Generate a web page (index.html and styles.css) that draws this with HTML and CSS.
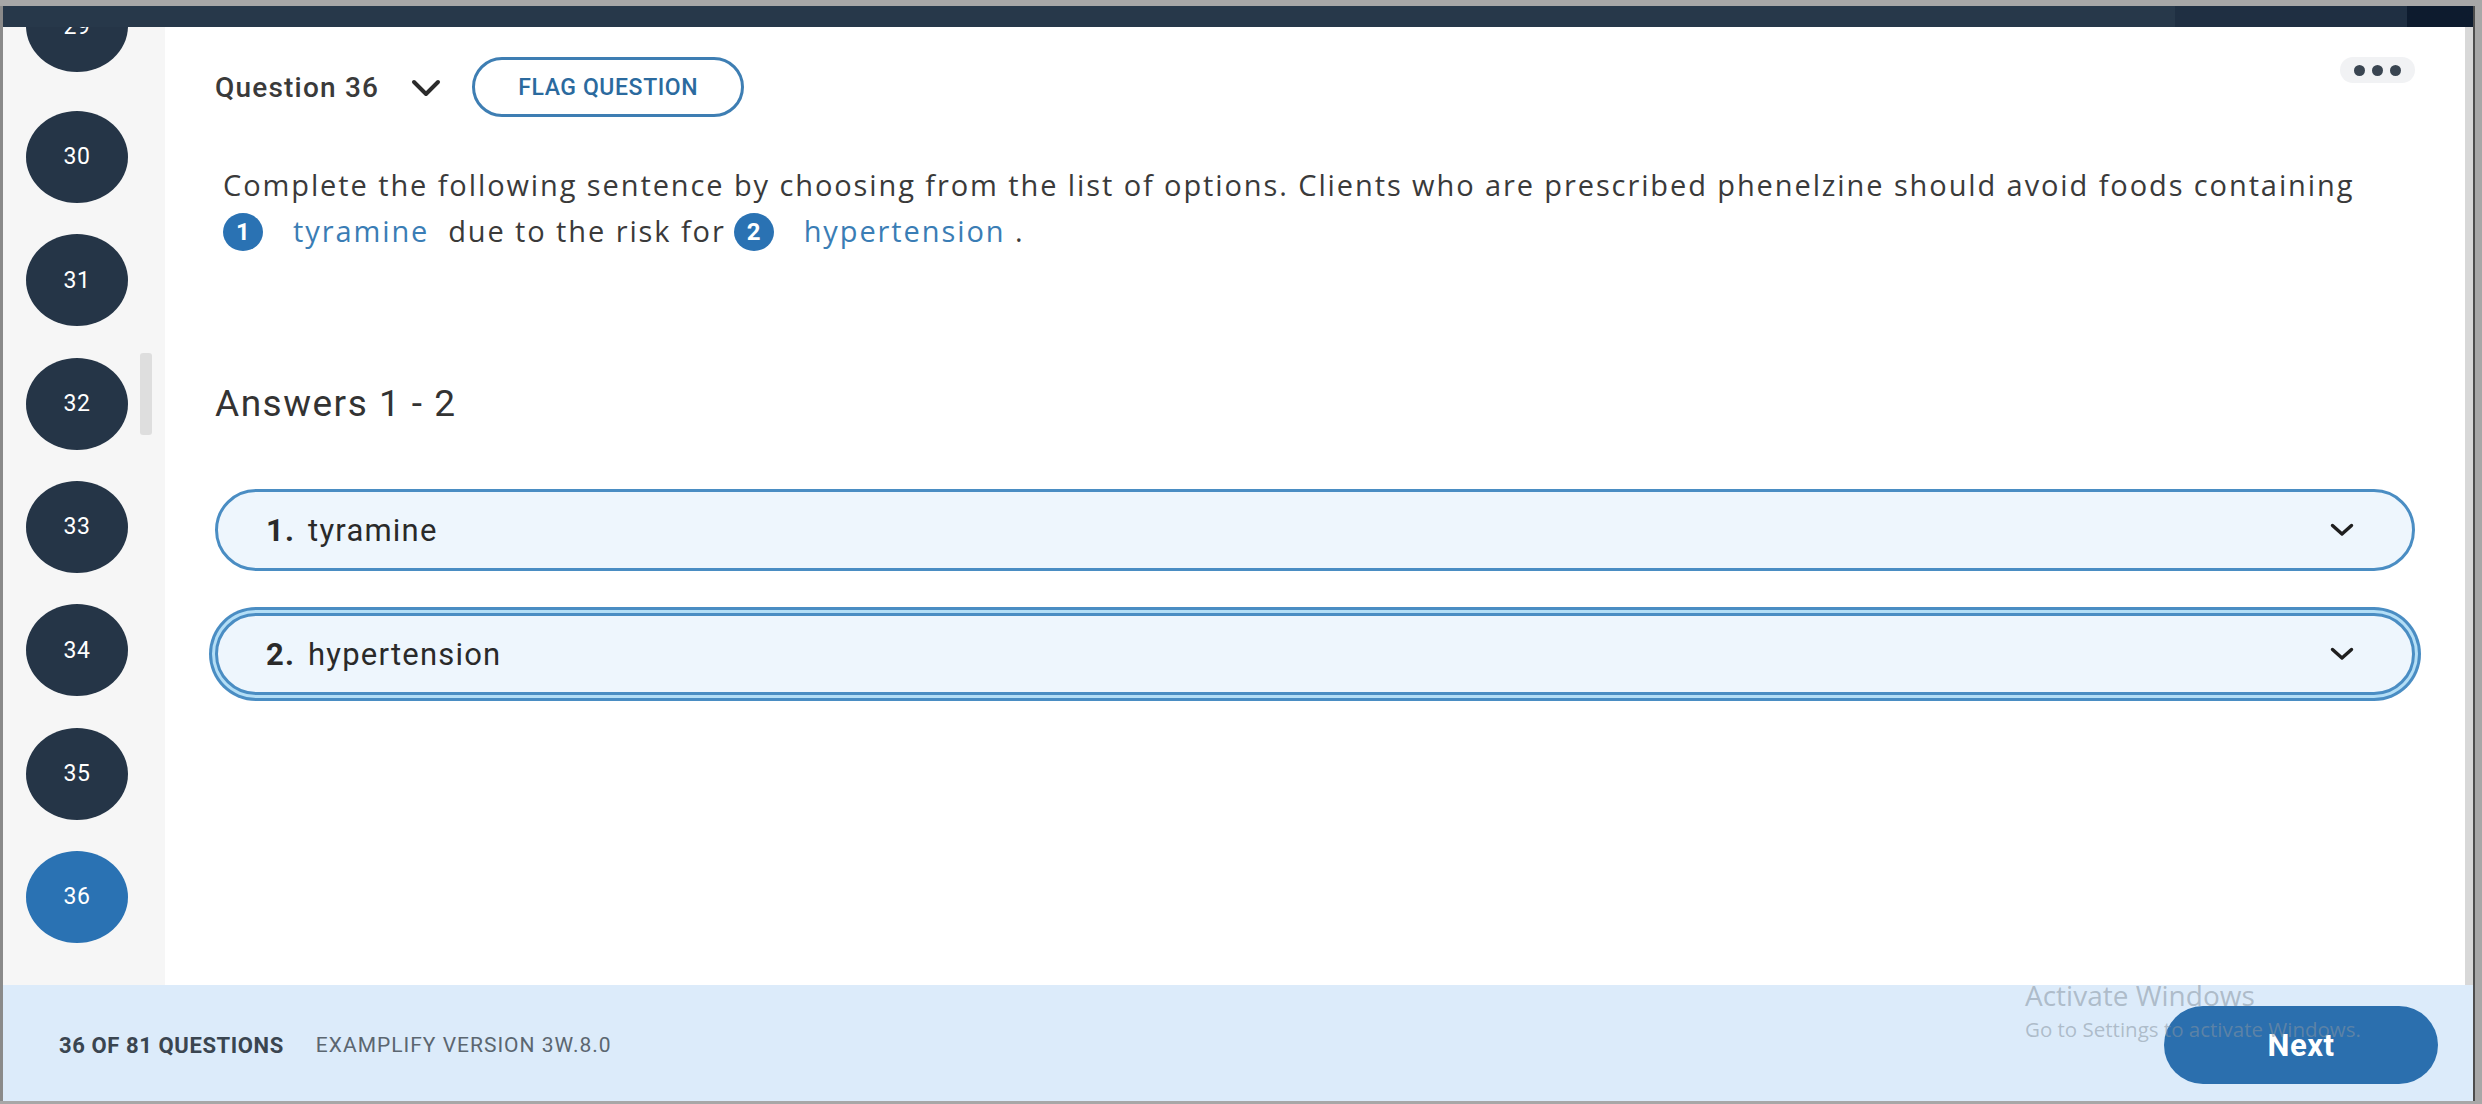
FILE: index.html
```html
<!DOCTYPE html>
<html lang="en">
<head>
<meta charset="utf-8">
<title>Examplify - Question 36</title>
<link rel="stylesheet" href="styles.css">
</head>
<body>
<div class="window">
  <div class="topbar"><div class="topbar-mid"></div><div class="topbar-end"></div></div>
  <div class="main">
    <aside class="sidebar">
      <ol class="qlist">
        <li class="qnum">29</li>
        <li class="qnum">30</li>
        <li class="qnum">31</li>
        <li class="qnum">32</li>
        <li class="qnum">33</li>
        <li class="qnum">34</li>
        <li class="qnum">35</li>
        <li class="qnum active">36</li>
      </ol>
      <div class="scroll-thumb"></div>
    </aside>
    <section class="content">
      <header class="qhead">
        <span class="qtitle">Question 36</span>
        <svg class="qchev" viewBox="0 0 30 18" width="30" height="18"><path d="M3 3 L15 15 L27 3" fill="none" stroke="#2b2b2b" stroke-width="4" stroke-linecap="round" stroke-linejoin="round"/></svg>
        <button class="flag">FLAG QUESTION</button>
        <button class="more"><span class="dot"></span><span class="dot"></span><span class="dot"></span></button>
      </header>
      <p class="prompt">Complete the following sentence by choosing from the list of options. Clients who are prescribed phenelzine should avoid foods containing <span class="badge">1</span><span class="fill">tyramine</span>&nbsp; due to the risk for<span class="badge b2">2</span><span class="fill">hypertension</span> .</p>
      <h2 class="answers-title">Answers 1 - 2</h2>
      <div class="answer">
        <span class="answer-text"><b>1.</b> tyramine</span>
        <svg class="achev" viewBox="0 0 24 14" width="24" height="14"><path d="M2.5 2.5 L12 11 L21.5 2.5" fill="none" stroke="#1f1f1f" stroke-width="3.4" stroke-linecap="round" stroke-linejoin="round"/></svg>
      </div>
      <div class="answer focused">
        <span class="answer-text"><b>2.</b> hypertension</span>
        <svg class="achev" viewBox="0 0 24 14" width="24" height="14"><path d="M2.5 2.5 L12 11 L21.5 2.5" fill="none" stroke="#1f1f1f" stroke-width="3.4" stroke-linecap="round" stroke-linejoin="round"/></svg>
      </div>
    </section>
    <div class="track"></div>
  </div>
  <footer class="footer">
    <span class="count">36 OF 81 QUESTIONS</span>
    <span class="version">EXAMPLIFY VERSION 3W.8.0</span>
    <button class="next">Next</button>
  </footer>
</div>
<div class="watermark">
  <div class="wm1">Activate Windows</div>
  <div class="wm2">Go to Settings to activate Windows.</div>
</div>
</body>
</html>
```

FILE: styles.css
```css
html, body {
  margin: 0;
  padding: 0;
}
body {
  background: #a7a7a7;
  width: 2482px;
  height: 1104px;
  overflow: hidden;
  position: relative;
  font-family: Roboto, "Liberation Sans", Arial, sans-serif;
}
.window {
  margin: 6px 0 0 3px;
  width: 2470px;
  height: 1095px;
  display: flex;
  flex-direction: column;
  box-shadow: 2px 0 0 #4d4d4d, -3px 0 0 #8a8a8a;
  background: #fff;
}
.topbar {
  height: 21px;
  flex: none;
  background: #27384a;
  display: flex;
  justify-content: flex-end;
}
.topbar-mid {
  width: 232px;
  background: #1f2f42;
}
.topbar-end {
  width: 66px;
  background: #0d1b2e;
}
.main {
  flex: 1;
  display: flex;
  min-height: 0;
}
.sidebar {
  width: 162px;
  flex: none;
  background: #f6f6f6;
  overflow: hidden;
  position: relative;
}
.qlist {
  list-style: none;
  margin: -47px 0 0 0;
  padding: 0 0 0 23px;
  display: flex;
  flex-direction: column;
  gap: 31.33px;
}
.qnum {
  width: 102px;
  height: 92px;
  border-radius: 50%;
  background: #253547;
  color: #fff;
  font-size: 23px;
  letter-spacing: 0.5px;
  display: flex;
  align-items: center;
  justify-content: center;
}
.qlist .qnum:first-child {
  margin-bottom: 7.67px;
}
.qnum.active {
  background: #2a72b3;
}
.scroll-thumb {
  position: absolute;
  left: 137px;
  top: 326px;
  width: 12px;
  height: 82px;
  border-radius: 3px;
  background: #dedede;
}
.content {
  flex: 1;
  padding: 30px 50px 0 50px;
  min-width: 0;
}
.track {
  width: 8px;
  flex: none;
  background: #d8d8d8;
}
.qhead {
  height: 60px;
  display: flex;
  align-items: center;
}
.qtitle {
  font-size: 28px;
  font-weight: 500;
  letter-spacing: 1.2px;
  color: #3a3a3a;
}
.qchev {
  margin-left: 32px;
  margin-top: 2px;
}
.flag {
  margin-left: 31px;
  width: 272px;
  height: 60px;
  border: 3px solid #3e7eb3;
  border-radius: 30px;
  background: #fff;
  color: #2b6a9e;
  font-family: Roboto, "Liberation Sans", Arial, sans-serif;
  font-size: 23px;
  font-weight: 500;
  letter-spacing: 0.6px;
  padding: 0;
}
.more {
  margin-left: auto;
  align-self: flex-start;
  width: 75px;
  height: 26px;
  border: none;
  border-radius: 13px;
  background: #f1f2f4;
  display: flex;
  align-items: center;
  justify-content: center;
  gap: 7px;
  padding: 0;
}
.dot {
  width: 11px;
  height: 11px;
  border-radius: 50%;
  background: #3a4551;
}
.prompt {
  margin: 45px 0 0 0;
  padding-left: 8px;
  font-family: "Open Sans", Roboto, sans-serif;
  font-size: 29px;
  line-height: 46px;
  letter-spacing: 1.9px;
  color: #3a3a3a;
}
.badge {
  display: inline-flex;
  align-items: center;
  justify-content: center;
  width: 40px;
  height: 38px;
  border-radius: 50%;
  background: #2a72b3;
  color: #fff;
  font-family: Roboto, sans-serif;
  font-weight: 700;
  font-size: 24px;
  line-height: 38px;
  letter-spacing: 0;
  vertical-align: middle;
  margin-right: 30px;
  position: relative;
  top: -2px;
}
.badge.b2 {
  margin-left: 8px;
  margin-right: 30px;
}
.fill {
  color: #3a7db5;
}
.answers-title {
  margin: 128px 0 0 0;
  font-size: 37px;
  line-height: 44px;
  font-weight: 400;
  letter-spacing: 1.5px;
  color: #333;
}
.answer {
  margin-top: 63px;
  height: 82px;
  box-sizing: border-box;
  border: 3px solid #4a8dc3;
  border-radius: 41px;
  background: #eef6fd;
  display: flex;
  align-items: center;
  padding: 0 58px 0 48px;
}
.answer + .answer {
  margin-top: 42px;
}
.answer.focused {
  box-shadow: 0 0 0 3px #b3def6, 0 0 0 6px #4a8dc3;
}
.answer-text {
  font-size: 31px;
  letter-spacing: 1.2px;
  color: #2a2a2a;
}
.answer-text b {
  font-weight: 700;
  margin-right: 4px;
}
.achev {
  margin-left: auto;
}
.footer {
  height: 116px;
  flex: none;
  box-sizing: border-box;
  background: #dcebfa;
  display: flex;
  align-items: center;
  padding: 4px 35px 0 56px;
}
.count {
  font-size: 22px;
  font-weight: 700;
  letter-spacing: 0.6px;
  color: #3a4550;
}
.version {
  margin-left: 32px;
  font-size: 21px;
  letter-spacing: 1px;
  color: #5b6670;
}
.next {
  margin-left: auto;
  width: 274px;
  height: 78px;
  border: none;
  border-radius: 39px;
  background: #2b6fae;
  color: #fff;
  font-family: Roboto, "Liberation Sans", Arial, sans-serif;
  font-size: 31px;
  font-weight: 700;
  letter-spacing: 0.5px;
  padding: 0;
}
.watermark {
  position: absolute;
  left: 2025px;
  top: 976px;
  pointer-events: none;
  font-family: "Open Sans", "Noto Sans", sans-serif;
  color: rgba(135, 148, 160, 0.55);
}
.wm1 {
  font-size: 28px;
  line-height: 38px;
}
.wm2 {
  font-size: 20.5px;
  line-height: 30px;
}
```
